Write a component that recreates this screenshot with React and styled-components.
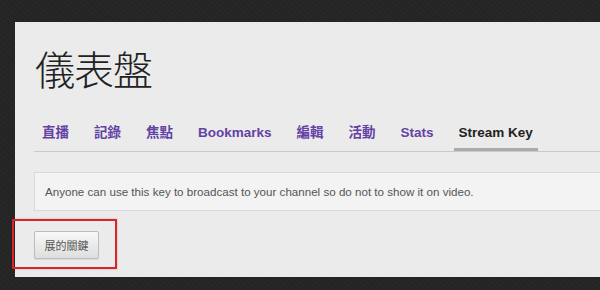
import React from "react";
import styled, { createGlobalStyle } from "styled-components";

const GlobalStyle = createGlobalStyle`
  html, body {
    margin: 0;
    padding: 0;
    background: #242424;
    overflow: hidden;
  }
  body {
    font-family: "Liberation Sans", Arial, "Noto Sans CJK TC", sans-serif;
  }
`;

const Page = styled.div`
  position: relative;
  width: 600px;
  height: 290px;
  overflow: hidden;
  padding: 22px 0 0 15px;
  box-sizing: border-box;
  background:
    repeating-linear-gradient(45deg, rgba(255,255,255,0.015) 0 2px, transparent 2px 4px),
    #242424;
`;

const Panel = styled.div`
  width: 585px;
  height: 255px;
  box-sizing: border-box;
  padding: 20px 0 0 19px;
  background: #ebebeb;
`;

const Title = styled.h1`
  margin: 0 0 0 1px;
  font-family: "Noto Sans CJK TC", "Noto Sans CJK SC", sans-serif;
  font-weight: 300;
  font-size: 40px;
  line-height: 52px;
  color: #222;
  letter-spacing: -1px;
`;

const Tabs = styled.nav`
  display: flex;
  margin-top: 30px;
  padding-left: 3px;
  gap: 15px;
  border-bottom: 1px solid #cacaca;
`;

const Tab = styled.a`
  display: block;
  padding: 0 5px 6px;
  font-family: "Liberation Sans", Arial, "Noto Sans CJK TC", sans-serif;
  font-weight: bold;
  font-size: 13.5px;
  line-height: 18px;
  color: ${(p) => (p.$active ? "#222" : "#6441a5")};
  border-bottom: 3px solid ${(p) => (p.$active ? "#aaa" : "transparent")};
  text-decoration: none;
  cursor: pointer;
`;

const Notice = styled.div`
  margin-top: 20px;
  height: 39px;
  box-sizing: border-box;
  display: flex;
  align-items: center;
  padding: 0 10px;
  background: #f3f3f3;
  border: 1px solid #d9d9d9;
  border-right: none;
  font-size: 11.6px;
  color: #555;
`;

const Button = styled.button`
  display: block;
  margin-top: 20px;
  width: 65px;
  height: 28px;
  padding: 0;
  font-family: "Noto Sans CJK TC", sans-serif;
  font-size: 11px;
  color: #555;
  border: 1px solid #bdbdbd;
  border-radius: 2px;
  background: linear-gradient(#f8f8f8, #dedede);
  box-shadow: 0 1px 1px rgba(0, 0, 0, 0.08);
`;

const Highlight = styled.div`
  position: absolute;
  left: 12px;
  top: 219px;
  width: 105px;
  height: 50px;
  box-sizing: border-box;
  border: 2px solid #de2227;
  box-shadow: 0 0 2px rgba(0, 0, 0, 0.25);
  pointer-events: none;
`;

const tabs = ["直播", "記錄", "焦點", "Bookmarks", "編輯", "活動", "Stats", "Stream Key"];

export default function App() {
  return (
    <>
      <GlobalStyle />
      <Page>
        <Panel>
          <Title>儀表盤</Title>
          <Tabs>
            {tabs.map((t) => (
              <Tab key={t} $active={t === "Stream Key"}>
                {t}
              </Tab>
            ))}
          </Tabs>
          <Notice>
            Anyone can use this key to broadcast to your channel so do not to show it on video.
          </Notice>
          <Button>展的關鍵</Button>
        </Panel>
        <Highlight />
      </Page>
    </>
  );
}
